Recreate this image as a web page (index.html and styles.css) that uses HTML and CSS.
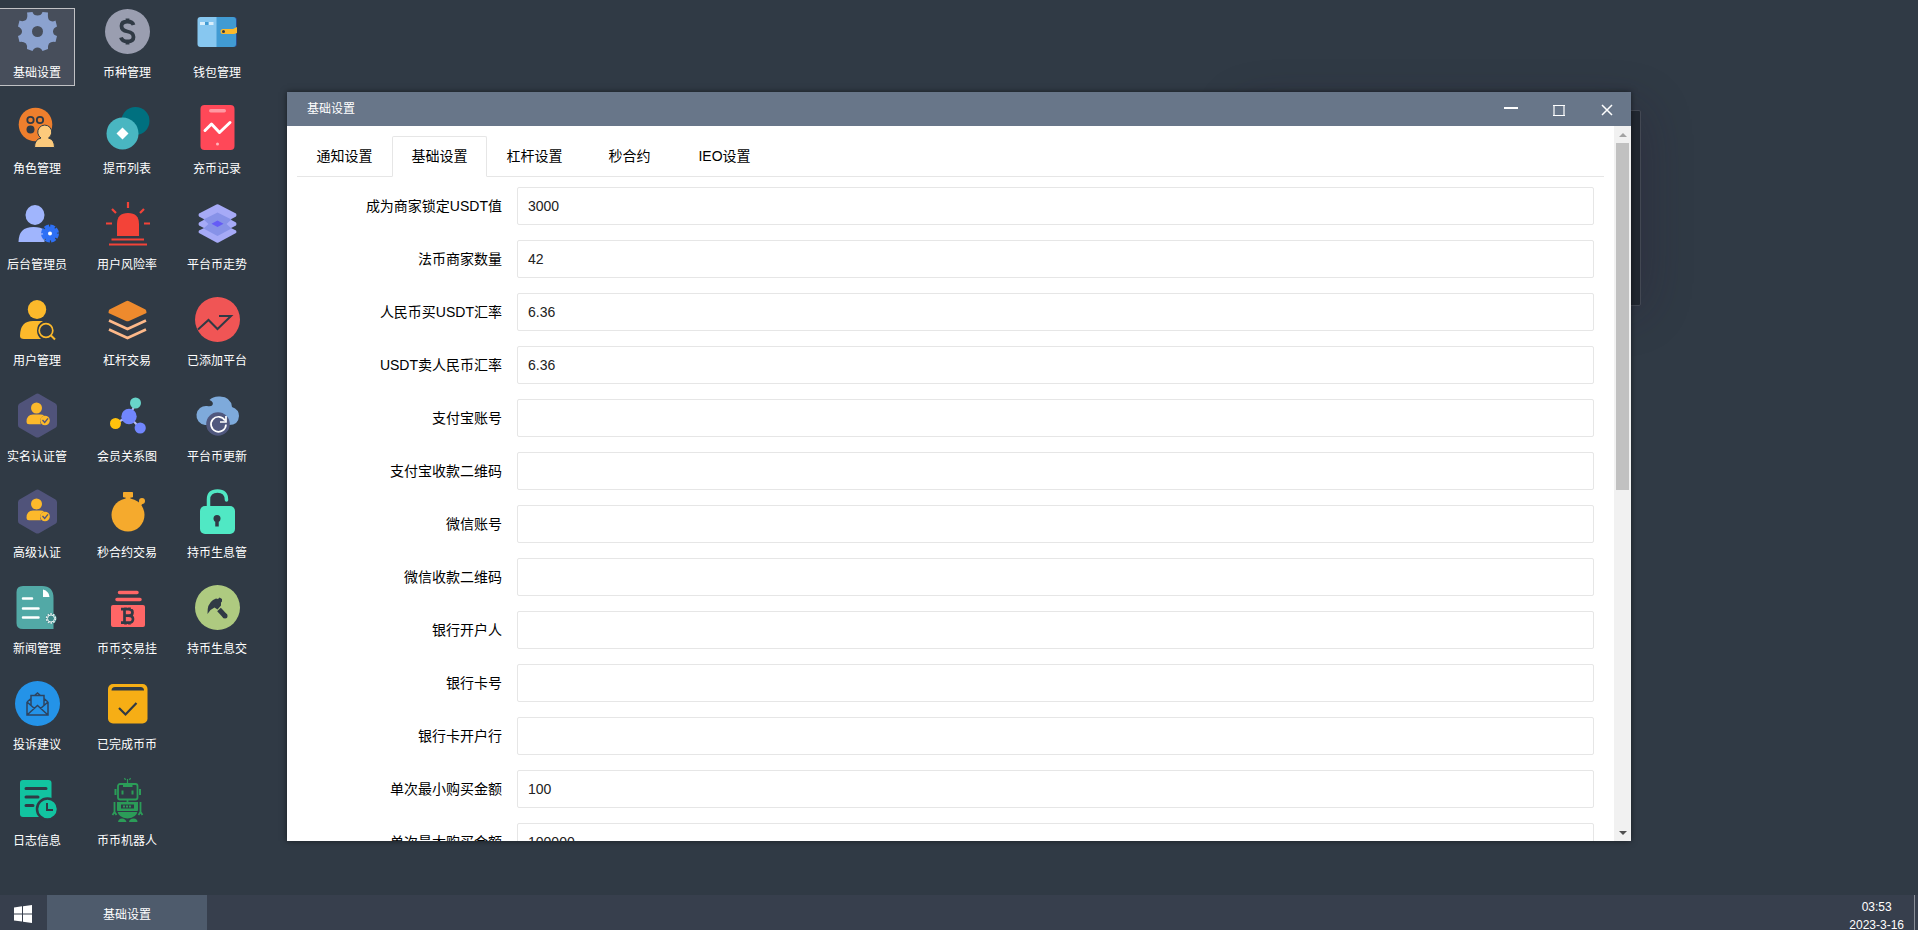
FILE: index.html
```html
<!DOCTYPE html>
<html lang="zh-CN">
<head>
  <meta charset="UTF-8" />
  <meta name="viewport" content="width=device-width, initial-scale=1.0"/>
  <title>基础设置</title>
  <link rel="stylesheet" href="styles.css">
</head>
<body>

<!-- shared shapes -->
<svg class="defs" aria-hidden="true">
  <symbol id="verify" viewBox="0 0 45 45">
    <path d="M20.500 1.200Q22.500 0 24.500 1.200L40.500 10.500Q42 11.500 42 13.500V32Q42 34 40.500 34.800L24.500 44Q22.500 45.200 20.500 44L4.500 34.800Q3 34 3 32V13.500Q3 11.500 4.500 10.500Z" fill="#50537a"/>
    <circle cx="21.500" cy="15" r="5.500" fill="#fcb92b"/>
    <path d="M11.500 29Q11.500 21.500 18 21.500H25.500Q28 21.500 29 22.500Q25 24.500 25 28Q25 30 26 31.300H14Q11.500 31.300 11.500 29Z" fill="#fcb92b"/>
    <circle cx="30" cy="27.500" r="4.800" fill="#fcb92b"/>
    <path d="M27.500 27l2.200 2.500 3.300-4.200" fill="none" stroke="#50537a" stroke-width="1.300"/>
  </symbol>
</svg>

<main class="desktop">
  <nav class="icons">
    <a href="#" class="item active">
      <svg viewBox="0 0 45 45"><path d="M12 3.500L17.500 3Q18.500 6.500 22.500 6.500T27.500 3L33 3.500Q32.500 9 34 11Q37 13.500 40.500 11.500L42 17.500Q38 19 38 22.500T42 27L40.500 33Q36.500 32 34 34.500Q32.500 37 33 40L27.500 42Q26 38.500 22.500 38.500T17.500 42L12 40Q12.500 36.500 11 34.500Q8 32 4.500 33L3 27Q7 25.500 7 22.500T3 17.500L4.500 11.500Q8 13 11 11Q13 8.500 12 3.500Z" fill="#8ba2cf"/><circle cx="22.500" cy="22.500" r="5.500" fill="#474e5b"/></svg>
      <span>基础设置</span>
    </a>
    <a href="#" class="item">
      <svg viewBox="0 0 45 45"><circle cx="22.500" cy="22.500" r="22.500" fill="#9a9eb0"/><path d="M28.500 16Q27.500 12.500 22.500 12.500Q16.500 12.500 16.500 17T22.500 22.500T28.500 28T22.500 32.500Q17 32.500 16 28.500M22.500 9.500v4M22.500 32v3.500" fill="none" stroke="#303a45" stroke-width="3.800"/></svg>
      <span>币种管理</span>
    </a>
    <a href="#" class="item">
      <svg viewBox="0 0 45 45"><rect x="6" y="8" width="36" height="30" rx="3" fill="#2b4a8c"/><path d="M21 8h17q3 0 3 3v24q0 3-3 3H21z" fill="#419bd3"/><path d="M6 8h15.500v30H5.500q-3 0-3-3V11q0-3 3-3z" fill="#87c7f0"/><path d="M5 13h5v3H5zM13.500 13h5v3h-5z" fill="#d8eefb"/><path d="M10 13h3.500v3H10z" fill="#419bd3"/><path d="M28 20h10l4-2v6l-3 1H28q-2.500 0-2.500-2.500T28 20z" fill="#fcb92b"/><circle cx="28.500" cy="22.500" r="1.500" fill="#303a45"/></svg>
      <span>钱包管理</span>
    </a>

    <a href="#" class="item">
      <svg viewBox="0 0 45 45"><circle cx="20.500" cy="19.500" r="16.800" fill="#ef7f2d"/><g fill="none" stroke="#303a45" stroke-width="1.800"><circle cx="15.500" cy="15" r="3.200"/><circle cx="25" cy="15" r="3.200"/></g><circle cx="15.500" cy="24.500" r="4" fill="#303a45"/><path d="M19.500 42.500q0-8 6.500-9.500a7 7 0 1 1 7.500 0q6 1.500 6 9.500z" fill="#fcca7c" stroke="#303a45" stroke-width="1"/></svg>
      <span>角色管理</span>
    </a>
    <a href="#" class="item">
      <svg viewBox="0 0 45 45"><circle cx="30.500" cy="16" r="14" fill="#00707f"/><circle cx="17.500" cy="28.500" r="16" fill="#49b6c1"/><path d="M17.500 22.500l6 6-6 6-6-6z" fill="#fff"/></svg>
      <span>提币列表</span>
    </a>
    <a href="#" class="item">
      <svg viewBox="0 0 45 45"><rect x="5.500" width="34" height="45" rx="4" fill="#ff4858"/><rect x="14" y="4" width="17" height="3.500" rx="1.700" fill="#ff99a2"/><path d="M10 25.500l6.500-6.500 8 8.500L35 17.500" fill="none" stroke="#fff" stroke-width="3" stroke-linecap="round" stroke-linejoin="round"/><circle cx="22.500" cy="39" r="1.500" fill="#ffb5bb"/></svg>
      <span>充币记录</span>
    </a>

    <a href="#" class="item">
      <svg viewBox="0 0 45 45"><ellipse cx="20" cy="14" rx="9.500" ry="10" fill="#a0b5fd"/><path d="M3.500 41Q3.500 26 18.500 26Q26 26 29.500 29V41z" fill="#a0b5fd"/><circle cx="35" cy="32.500" r="7" fill="#2e70f5"/><circle cx="35" cy="32.500" r="7" fill="none" stroke="#2e70f5" stroke-width="4" stroke-dasharray="4.400 1.100"/><circle cx="35" cy="32.500" r="2" fill="#fff"/></svg>
      <span>后台管理员</span>
    </a>
    <a href="#" class="item">
      <svg viewBox="0 0 45 45"><path d="M12 35V23q0-11 11-11t11 11v12z" fill="#f34338"/><path d="M6.500 38.500h32.500M4 43.500h38M1 22.500h6M39 22.500h6M23 1v6M7 8l4 4M39 8l-4 4" stroke="#f34338" stroke-width="2.200" fill="none"/></svg>
      <span>用户风险率</span>
    </a>
    <a href="#" class="item">
      <svg viewBox="0 0 45 45"><path d="M22.500 20.500L41 29.500Q42 31 41 32L23.500 41.500Q22.500 42 21.500 41.500L4 32Q3 31 4 29.500z" fill="#a6aaf7"/><path d="M22.500 11.500L41 21.500Q42 23 41 24.500L22.500 34L4 24.500Q3 23 4 21.500z" fill="#a6aaf7"/><path d="M21.500 3.500Q22.500 3 23.500 3.500L41 12.500Q42 14 41 15.500L22.500 25.500L4 15.500Q3 14 4 12.500z" fill="#a6aaf7"/><path d="M22.500 11.500l14 7-5 4.500 5 4.500-14 7.500-14-7.500 5-4.500-5-4.500z" fill="#8792e8"/><path d="M22.500 19.500l6 3.200-6 3.300-6-3.300z" fill="#655cf6"/></svg>
      <span>平台币走势</span>
    </a>

    <a href="#" class="item">
      <svg viewBox="0 0 45 45"><ellipse cx="22" cy="12.500" rx="9.200" ry="9.500" fill="#fcb92b"/><path d="M5 39Q5 24 18 24H28Q22 27 22 33.500Q22 39 26 42H9Q5 42 5 39z" fill="#fcb92b"/><circle cx="31" cy="33.500" r="6.800" fill="none" stroke="#fcb92b" stroke-width="1.700"/><path d="M36 38.500l4 4" stroke="#fcb92b" stroke-width="2"/></svg>
      <span>用户管理</span>
    </a>
    <a href="#" class="item">
      <svg viewBox="0 0 45 45"><path d="M21 4.200Q22.500 3.500 24 4.200L40.500 12.500Q41.500 13 41.500 16L24 24Q22.500 24.700 21 24L3.500 16Q3.500 13 4.500 12.500z" fill="#ee8a2d"/><path d="M4 23.500l18.500 8.500L41 23.500M4 32.500l18.500 8.500L41 32.500" fill="none" stroke="#fdb98a" stroke-width="2.600"/></svg>
      <span>杠杆交易</span>
    </a>
    <a href="#" class="item">
      <svg viewBox="0 0 45 45"><circle cx="22.500" cy="22.500" r="22.500" fill="#f05555"/><path d="M3 32.500L13.500 23l9 9L36 19H24" fill="none" stroke="#303a45" stroke-width="2"/></svg>
      <span>已添加平台</span>
    </a>

    <a href="#" class="item">
      <svg><use href="#verify"/></svg>
      <span>实名认证管</span>
    </a>
    <a href="#" class="item">
      <svg viewBox="0 0 45 45"><path d="M10 30.500L24 23.500L31 10M24 23.500L35 35" stroke="#b7bdf3" stroke-width="2" fill="none"/><circle cx="24" cy="23.500" r="7.700" fill="#7186fd"/><circle cx="30.500" cy="10" r="5.500" fill="#68d4ca"/><circle cx="10.500" cy="30.500" r="5.500" fill="#ffc20d"/><circle cx="35.200" cy="35" r="5.600" fill="#7186fd"/></svg>
      <span>会员关系图</span>
    </a>
    <a href="#" class="item">
      <svg viewBox="0 0 45 45"><path d="M10 32A9.500 9.500 0 1 1 12 13Q16 14 17.500 12Q19 9 14.500 7Q18 3 25 3.500Q36 4 37 14Q44 16.500 44 23Q43.500 32 34 32z" fill="#7eaadb"/><circle cx="23" cy="31" r="11.800" fill="#50587e"/><path d="M30 27.500A7.500 7.500 0 1 0 31 31.500M31 23v6h-6" fill="none" stroke="#fff" stroke-width="1.700"/></svg>
      <span>平台币更新</span>
    </a>

    <a href="#" class="item">
      <svg><use href="#verify"/></svg>
      <span>高级认证</span>
    </a>
    <a href="#" class="item">
      <svg viewBox="0 0 45 45"><ellipse cx="23" cy="26" rx="16.500" ry="16.500" fill="#f5aa2d"/><path d="M18.500 3.500h9v4.500h-2.500v3h-4V8h-2.500z" fill="#f5aa2d" stroke="#f5aa2d"/><path d="M33 17l4-4.500" stroke="#f5aa2d" stroke-width="4"/><circle cx="37" cy="12" r="3" fill="#f5aa2d"/></svg>
      <span>秒合约交易</span>
    </a>
    <a href="#" class="item">
      <svg viewBox="0 0 45 45"><rect x="5" y="17" width="35" height="28" rx="5" fill="#50e8c4"/><path d="M13.500 18V10.500q0-8.500 9-8.500t9 9" fill="none" stroke="#50e8c4" stroke-width="3.500" stroke-linecap="round"/><circle cx="22" cy="29.500" r="3.500" fill="#303a45"/><path d="M22 30v7.500" stroke="#303a45" stroke-width="3.500"/></svg>
      <span>持币生息管</span>
    </a>

    <a href="#" class="item">
      <svg viewBox="0 0 45 45"><path d="M8 1H27Q38.500 1 38.500 13V44H8Q1.500 44 1.500 38V7Q1.500 1 8 1z" fill="#52a9a6"/><path d="M28 4.500Q34 6 34.500 12H28z" fill="#fff"/><path d="M8 13.500h9M8 23.500h15.500M8 32.500h15.500" stroke="#fff" stroke-width="2.500" stroke-linecap="round"/><circle cx="36" cy="33.500" r="5.500" fill="#3c8a8b"/><circle cx="36" cy="33.500" r="4.500" fill="none" stroke="#e5efef" stroke-width="1.500" stroke-dasharray="1.800 1.030"/><circle cx="36" cy="33.500" r="3.500" fill="none" stroke="#e5efef" stroke-width="1"/></svg>
      <span>新闻管理</span>
    </a>
    <a href="#" class="item">
      <svg viewBox="0 0 45 45"><rect x="6" y="20" width="34" height="22" rx="2" fill="#ff6666"/><path d="M14.500 7.500H32M12 14.500h23" stroke="#ff6666" stroke-width="3.500" stroke-linecap="round"/><path d="M16 24.200h7.500q4 0 4 3.200t-4 3.200q4.500 0 4.500 3.500T24 37.600h-8M19.500 24v14M19.500 30.700h5M20.500 22.500V25M24.500 22.500V25M20.500 37v2.500M24.500 37v2.500" fill="none" stroke="#303a45" stroke-width="2.700"/></svg>
      <span>币币交易挂单</span>
    </a>
    <a href="#" class="item">
      <svg viewBox="0 0 45 45"><circle cx="22.500" cy="22.500" r="22.500" fill="#aeca80"/><path d="M12.500 29Q12 19 18 15L21 13.500L23 14L24.500 12.500L27 14V16.500L26 17.500L26 20.500L22.500 24.500L19.500 22.500L15.500 25z" fill="#303a45"/><path d="M24 24.500l6.500 7" stroke="#303a45" stroke-width="5" /><circle cx="30" cy="31" r="2.500" fill="#303a45"/></svg>
      <span>持币生息交</span>
    </a>

    <a href="#" class="item">
      <svg viewBox="0 0 45 45"><circle cx="22.500" cy="22.500" r="22.500" fill="#2493e8"/><path d="M12 21v13h21V21M12 34l10.500-9.500L33 34M12 21l7.500 6.500M33 21l-7.500 6.500M12 21l4-3.500M33 21l-4-3.500M16 24V14.500h13V24M19.500 14.500l3-2.500 3 2.500" fill="none" stroke="#2d4460" stroke-width="1.500"/></svg>
      <span>投诉建议</span>
    </a>
    <a href="#" class="item">
      <svg viewBox="0 0 45 45"><rect x="3" y="3" width="39.500" height="39.500" rx="5" fill="#f6ae15"/><path d="M6.500 9.500Q6.500 6 10 6H35.500Q39 6 39 9.500z" fill="#303a45"/><path d="M14 27l6.500 6.500L31.500 22" fill="none" stroke="#303a45" stroke-width="2.200"/></svg>
      <span>已完成币币</span>
    </a>
    <span class="item empty"></span>

    <a href="#" class="item">
      <svg viewBox="0 0 45 45"><rect x="5" y="3" width="31.500" height="37" rx="3" fill="#12c3a0"/><path d="M11 11.500h20M11 20h12M11 28.500h7" stroke="#303a45" stroke-width="3" stroke-linecap="round"/><circle cx="32.500" cy="32" r="10.500" fill="#12c3a0" stroke="#303a45" stroke-width="2.500"/><path d="M32 26v7h6" fill="none" stroke="#303a45" stroke-width="2"/></svg>
      <span>日志信息</span>
    </a>
    <a href="#" class="item">
      <svg viewBox="0 0 45 45"><g fill="none" stroke="#2b9c58"><path d="M22.500 2v5M19.500 1l1 2M25.500 1l-1 2" stroke-width="1.200"/><rect x="13" y="7" width="19.500" height="15.500" rx="2" stroke-width="1.800"/><path d="M18 9h9.500M17.500 13.500v4M27.500 13.500v4" stroke-width="2"/><path d="M10.500 12v6M35 12v6" stroke-width="2"/><path d="M22.500 22.500v3M9.500 25v10l-2 3M35.500 25v10l2 3M9.500 35l2 3M35.500 35l-2 3" stroke-width="1.800"/></g><path d="M12 25h21v8q-1.500 8-10.500 8.500Q13.500 41 12 33z" fill="#2b9c58"/><path d="M16 27.500h13v4H16zM12 34h21v1H12z" fill="#303a45"/><path d="M18 29.500h9" stroke="#2b9c58" stroke-width="2" stroke-dasharray="2 1"/><path d="M13 45q.5-3.500 4-3.500t4.500 3.500zM24 45q.5-3.500 4.500-3.500t4 3.500z" fill="#2b9c58"/></svg>
      <span>币币机器人</span>
    </a>
  </nav>

  <div class="panel-back"></div>

  <section class="window">
    <header class="title">
      <h1>基础设置</h1>
      <button type="button" aria-label="最小化"><svg viewBox="0 0 14 14"><path d="M0 5h14" stroke-width="2"/></svg></button>
      <button type="button" aria-label="最大化"><svg viewBox="0 0 14 14"><path d="M1 2.500h12M1 12.500h12"/><path d="M2 2v11M12 2v11" stroke-width="2" opacity=".6"/></svg></button>
      <button type="button" aria-label="关闭"><svg viewBox="0 0 14 14"><path d="M2 2l10 10M12 2L2 12" stroke-width="1.500"/></svg></button>
    </header>

    <div class="body">
      <div class="content">
        <div class="tabs">
          <a href="#">通知设置</a>
          <a href="#" class="on">基础设置</a>
          <a href="#">杠杆设置</a>
          <a href="#">秒合约</a>
          <a href="#">IEO设置</a>
        </div>

        <form>
          <div class="row"><label for="f1">成为商家锁定USDT值</label><input type="text" id="f1" value="3000"></div>
          <div class="row"><label for="f2">法币商家数量</label><input type="text" id="f2" value="42"></div>
          <div class="row"><label for="f3">人民币买USDT汇率</label><input type="text" id="f3" value="6.36"></div>
          <div class="row"><label for="f4">USDT卖人民币汇率</label><input type="text" id="f4" value="6.36"></div>
          <div class="row"><label for="f5">支付宝账号</label><input type="text" id="f5"></div>
          <div class="row"><label for="f6">支付宝收款二维码</label><input type="text" id="f6"></div>
          <div class="row"><label for="f7">微信账号</label><input type="text" id="f7"></div>
          <div class="row"><label for="f8">微信收款二维码</label><input type="text" id="f8"></div>
          <div class="row"><label for="f9">银行开户人</label><input type="text" id="f9"></div>
          <div class="row"><label for="f10">银行卡号</label><input type="text" id="f10"></div>
          <div class="row"><label for="f11">银行卡开户行</label><input type="text" id="f11"></div>
          <div class="row"><label for="f12">单次最小购买金额</label><input type="text" id="f12" value="100"></div>
          <div class="row"><label for="f13">单次最大购买金额</label><input type="text" id="f13" value="100000"></div>
        </form>
      </div>

      <div class="scrollbar">
        <i class="up"></i>
        <div class="thumb"></div>
        <i class="down"></i>
      </div>
    </div>
  </section>
</main>

<footer class="taskbar">
  <button type="button" class="start" aria-label="开始">
    <svg viewBox="0 0 18 18"><path d="M0 2.500L8 1.300V8.500H0zM9 1.200L18 0V8.500H9zM0 9.500H8V16.500L0 15.500zM9 9.500H18V18L9 16.700z" fill="#fff"/></svg>
  </button>
  <button type="button" class="task">基础设置</button>
  <div class="clock"><span>03:53</span><span>2023-3-16</span></div>
</footer>

</body>
</html>
```

FILE: styles.css
```css
* {
  box-sizing: border-box;
}

body {
  margin: 0;
  height: 100vh;
  display: flex;
  flex-direction: column;
  overflow: hidden;
  background: #303a45;
  font-family: "Liberation Sans", "Noto Sans CJK SC", sans-serif;
  font-size: 14px;
}

a {
  color: inherit;
  text-decoration: none;
}

button {
  border: none;
  padding: 0;
  color: #fff;
  font-family: inherit;
  font-size: 12px;
  cursor: pointer;
}

.defs {
  position: absolute;
  width: 0;
  height: 0;
}

/* desktop */
.desktop {
  flex: 1;
  min-height: 0;
  position: relative;
}

.icons {
  display: grid;
  grid-template-columns: repeat(3, 76px);
  gap: 18px 14px;
  justify-content: start;
  margin-left: -1px;
  padding-top: 8px;
}

.item {
  height: 78px;
  border: 1px solid transparent;
  text-align: center;
  color: #fff;
  font-size: 12px;
  overflow: hidden;
}

.item.active {
  background: #474e5b;
  border-color: #c0c1c4;
}

.item svg {
  display: block;
  width: 45px;
  height: 45px;
  margin: 0 auto;
}

.item span {
  display: block;
  width: 66px;
  height: 18px;
  margin: 11px auto 0;
  line-height: 16px;
  overflow: hidden;
}

/* windows */
.panel-back {
  position: absolute;
  top: 110px;
  right: 277px;
  width: 400px;
  height: 196px;
  background: #212730;
  border: 1px solid #434853;
  border-radius: 2px;
  box-shadow: 1px 1px 50px rgba(40, 20, 50, 0.3);
}

.window {
  position: absolute;
  top: 92px;
  bottom: 54px;
  left: 287px;
  right: 287px;
  display: flex;
  flex-direction: column;
  background: #fff;
  box-shadow: 0 0 6px rgba(0, 0, 0, 0.5);
}

.title {
  display: flex;
  height: 34px;
  flex-shrink: 0;
  padding-left: 20px;
  background: #687689;
  color: #fff;
}

.title h1 {
  flex: 1;
  margin: 0;
  font-size: 12px;
  font-weight: normal;
  line-height: 34px;
}

.title button {
  width: 48px;
  background: none;
}

.title svg {
  display: block;
  width: 14px;
  height: 14px;
  margin: 2px auto 0;
  fill: none;
  stroke: #fff;
}

.body {
  flex: 1;
  min-height: 0;
  display: flex;
}

.content {
  flex: 1;
  padding: 10px;
  overflow: hidden;
}

.tabs {
  display: flex;
  height: 41px;
  border-bottom: 1px solid #e6e6e6;
}

.tabs a {
  width: 95px;
  height: 41px;
  line-height: 40px;
  text-align: center;
  color: #000;
}

.tabs .on {
  border: 1px solid #e6e6e6;
  border-bottom-color: #fff;
  border-radius: 2px 2px 0 0;
  line-height: 38px;
}

form {
  padding: 10px 10px 0 0;
}

.row {
  display: flex;
  margin-bottom: 15px;
}

.row label {
  width: 220px;
  padding: 9px 15px;
  line-height: 20px;
  text-align: right;
}

.row input {
  flex: 1;
  height: 38px;
  padding: 0 10px;
  border: 1px solid #e6e6e6;
  border-radius: 2px;
  font-family: inherit;
  font-size: 14px;
  color: #222;
}

.scrollbar {
  width: 17px;
  display: flex;
  flex-direction: column;
  align-items: center;
  background: #f1f1f1;
}

.scrollbar i {
  border: 4px solid transparent;
}

.scrollbar .up {
  margin: 3px 0 6px;
  border-bottom-color: #a3a3a3;
}

.scrollbar .down {
  margin: auto 0 2px;
  border-top-color: #505050;
}

.thumb {
  width: 13px;
  height: 48.5%;
  background: #c1c1c1;
}

/* taskbar */
.taskbar {
  height: 35px;
  display: flex;
  background: #373f4d;
  color: #fff;
  overflow: hidden;
}

.start {
  width: 46px;
  background: none;
}

.start svg {
  display: block;
  width: 18px;
  height: 18px;
  margin: 3px auto 0;
}

.task {
  width: 160px;
  margin-left: 1px;
  padding-top: 2px;
  background: #4e5b6c;
}

.clock {
  margin: 0 3px 0 auto;
  padding-right: 10px;
  border-right: 1px solid #8a8f98;
  display: flex;
  flex-direction: column;
  font-size: 12px;
  line-height: 18px;
  padding-top: 3px;
  text-align: center;
}
```
